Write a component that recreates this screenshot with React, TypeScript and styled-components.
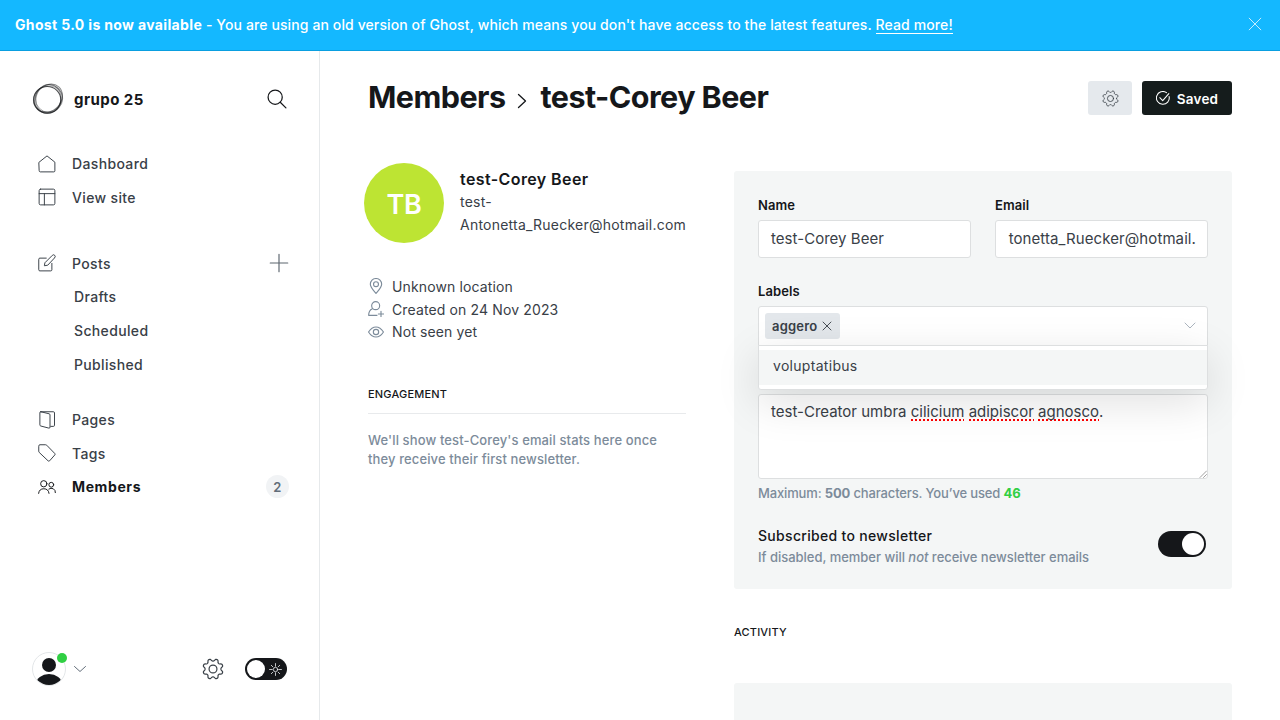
import React from "react";
import styled, { createGlobalStyle, css } from "styled-components";

const ink = "#15171a";
const slate = "#394047";
const muted = "#7c8b9a";
const rule = "#dddfe0";
const panel = "#f4f6f6";

const GlobalStyle = createGlobalStyle`
  *, *::before, *::after { box-sizing: border-box; }
  html, body { margin: 0; height: 100%; overflow: hidden; background: #fff; }
  body {
    font-family: Inter, "Liberation Sans", sans-serif;
    font-size: 14px;
    letter-spacing: 0.2px;
    color: ${ink};
    -webkit-font-smoothing: antialiased;
  }
  h1, h2, h4, p { margin: 0; }
  button { font: inherit; letter-spacing: inherit; border: 0; padding: 0; background: none; }
  svg { display: block; flex: none; }
`;

const Page = styled.div`
  height: 720px;
  display: flex;
  flex-direction: column;
  overflow: hidden;
`;

const Banner = styled.header`
  flex: none;
  height: 51px;
  padding: 0 18px 0 15px;
  display: flex;
  align-items: center;
  justify-content: space-between;
  background: #14b8ff;
  border-bottom: 1px solid #0a9fe0;
  color: #fff;
  font-size: 14px;
  font-weight: 500;
  line-height: 20px;
  letter-spacing: 0.11px;
  b { letter-spacing: 0.35px; }
  a { color: #fff; text-decoration: none; border-bottom: 1px solid #fff; }
  svg { margin-bottom: 2px; }
`;

const Body = styled.div`
  flex: 1;
  min-height: 0;
  display: flex;
`;

const Sidebar = styled.nav`
  width: 320px;
  flex: none;
  display: flex;
  flex-direction: column;
  border-right: 1px solid #e6e9eb;
  padding: 30px 30px 34px 32px;
`;

const Brand = styled.div`
  height: 36px;
  display: flex;
  align-items: center;
  margin-bottom: 30px;
  padding-right: 2px;
`;

const BrandName = styled.div`
  flex: 1;
  margin-left: 10px;
  font-size: 15px;
  font-weight: 700;
  letter-spacing: 0.45px;
  padding-top: 1px;
`;

const NavGroup = styled.div<{ $gap: number }>`
  margin-bottom: ${(p) => p.$gap}px;
`;

const NavRow = styled.div<{ $active?: boolean; $sub?: boolean }>`
  height: 33.6px;
  display: flex;
  align-items: center;
  padding-left: ${(p) => (p.$sub ? 42 : 6)}px;
  color: ${(p) => (p.$active ? ink : slate)};
  font-size: 14px;
  font-weight: ${(p) => (p.$active ? 700 : 500)};
  letter-spacing: ${(p) => (p.$active ? 0.6 : 0.35)}px;
`;

const NavIcon = styled.span`
  width: 34px;
  flex: none;
`;

const NavText = styled.span`
  flex: 1;
`;

const Count = styled.span`
  width: 23px;
  height: 23px;
  border-radius: 12px;
  display: grid;
  place-items: center;
  background: #f1f3f5;
  color: #626d79;
  font-size: 13px;
  font-weight: 600;
`;

const SidebarFooter = styled.div`
  margin-top: auto;
  display: flex;
  align-items: center;
  height: 34px;
`;

const Avatar = styled.div`
  position: relative;
  width: 34px;
  height: 34px;
  margin-right: 8px;
`;

const OnlineDot = styled.i`
  position: absolute;
  top: 1px;
  right: -1px;
  width: 10px;
  height: 10px;
  border-radius: 50%;
  background: #30cf43;
`;

const FooterGap = styled.div`
  flex: 1;
`;

const NightSwitch = styled.div`
  width: 42px;
  height: 22px;
  margin: 0 2px 0 21px;
  padding: 2px 5px 2px 2px;
  border-radius: 11px;
  background: ${ink};
  display: flex;
  align-items: center;
  justify-content: space-between;
`;

const Knob = styled.span<{ $size: number }>`
  width: ${(p) => p.$size}px;
  height: ${(p) => p.$size}px;
  border-radius: 50%;
  background: #fff;
`;

const Main = styled.main`
  flex: 1;
  min-width: 0;
  padding: 30px 48px 0;
`;

const TitleBar = styled.div`
  height: 34px;
  display: flex;
  align-items: center;
`;

const Title = styled.h1`
  flex: 1;
  display: flex;
  align-items: center;
  padding-bottom: 2px;
  font-size: 30.5px;
  line-height: 34px;
  font-weight: 700;
  letter-spacing: -0.55px;
  svg { margin: 7px 13px 0 12px; }
`;

const Button = styled.button<{ $primary?: boolean }>`
  height: 34px;
  width: ${(p) => (p.$primary ? 90 : 44)}px;
  margin-left: ${(p) => (p.$primary ? 10 : 0)}px;
  display: flex;
  align-items: center;
  justify-content: center;
  gap: 7px;
  border-radius: 3px;
  background: ${(p) => (p.$primary ? "#151c1c" : "#e5e9ed")};
  color: ${(p) => (p.$primary ? "#fff" : slate)};
  font-size: 13.5px;
  font-weight: 600;
  span { padding-top: 2px; }
`;

const Columns = styled.div`
  display: flex;
  margin-top: 48px;
  gap: 48px;
`;

const Profile = styled.section`
  width: 318px;
  flex: none;
`;

const Person = styled.div`
  display: flex;
  align-items: center;
  height: 80px;
  margin-left: -4px;
`;

const Initials = styled.div`
  width: 80px;
  height: 80px;
  flex: none;
  padding-top: 2px;
  border-radius: 50%;
  display: grid;
  place-items: center;
  background: #bde433;
  color: #fff;
  font-size: 27px;
  font-weight: 600;
  letter-spacing: -0.2px;
`;

const PersonText = styled.div`
  margin-left: 16px;
  padding-bottom: 3px;
  h2 { font-size: 16px; line-height: 22px; font-weight: 600; letter-spacing: 0.4px; }
  p { font-size: 14px; line-height: 23px; color: ${slate}; font-weight: 400; letter-spacing: 0.23px; }
`;

const Facts = styled.div`
  margin-top: 32px;
`;

const Fact = styled.div`
  display: flex;
  align-items: center;
  height: 22.8px;
  gap: 8px;
  font-size: 14px;
  color: ${slate};
  letter-spacing: 0.13px;
`;

const SectionTitle = styled.h4`
  font-size: 11px;
  line-height: 16px;
  font-weight: 500;
  text-transform: uppercase;
  letter-spacing: 0.18px;
`;

const Engagement = styled.div`
  margin-top: 42.4px;
  p {
    margin-top: 17px;
    font-size: 13px;
    line-height: 19px;
    font-weight: 500;
    color: ${muted};
    letter-spacing: 0.12px;
  }
`;

const Divider = styled.div`
  height: 1px;
  margin-top: 11px;
  background: #e8eaec;
`;

const Details = styled.section`
  flex: 1;
  min-width: 0;
  padding-top: 8px;
`;

const Card = styled.div`
  height: 418px;
  padding: 24px;
  border-radius: 3px;
  background: ${panel};
`;

const FieldPair = styled.div`
  display: grid;
  grid-template-columns: repeat(2, minmax(0, 1fr));
  gap: 24px;
`;

const Label = styled.label`
  display: block;
  height: 20px;
  margin-bottom: 5px;
  font-size: 13px;
  line-height: 20px;
  font-weight: 600;
  letter-spacing: 0.1px;
`;

const box = css`
  border: 1px solid ${rule};
  border-radius: 3px;
  background: #fff;
  color: ${slate};
  font-size: 15px;
  letter-spacing: 0.05px;
`;

const Input = styled.div<{ $end?: boolean }>`
  ${box}
  height: 38px;
  padding: 0 11px 0 12px;
  line-height: 36px;
  display: flex;
  justify-content: ${(p) => (p.$end ? "flex-end" : "flex-start")};
  letter-spacing: ${(p) => (p.$end ? 0.09 : 0.04)}px;
  white-space: nowrap;
  overflow: hidden;
`;

const LabelField = styled.div`
  position: relative;
  margin-top: 23px;
`;

const TokenBox = styled.div`
  ${box}
  height: 40px;
  padding: 0 11px 0 6px;
  display: flex;
  align-items: center;
  justify-content: space-between;
  border-radius: 3px 3px 0 0;
`;

const Token = styled.span`
  height: 26px;
  padding: 0 8px 1px 7px;
  display: flex;
  align-items: center;
  gap: 5px;
  border-radius: 3px;
  background: #e3e7eb;
  font-size: 13px;
  font-weight: 600;
  letter-spacing: 0.2px;
  line-height: 24px;
  svg { margin-top: 1px; }
`;

const Dropdown = styled.div`
  position: absolute;
  z-index: 2;
  left: 0;
  right: 0;
  top: 64px;
  height: 45px;
  padding: 4px 0;
  border: 1px solid ${rule};
  border-radius: 0 0 3px 3px;
  background: #fff;
  box-shadow: 0 12px 44px rgba(0, 0, 0, 0.13);
`;

const Option = styled.div`
  height: 35px;
  padding-left: 14px;
  line-height: 32px;
  background: ${panel};
  color: ${slate};
  font-size: 14px;
  letter-spacing: 0.3px;
`;

const Note = styled.div`
  ${box}
  margin-top: 48px;
  height: 85px;
  padding: 6px 12px;
  line-height: 22px;
  letter-spacing: 0;
  display: flex;
  justify-content: space-between;
  svg { align-self: flex-end; margin: 0 -12px -6px 0; }
`;

const Misspelt = styled.u`
  text-decoration: none;
  background: repeating-linear-gradient(90deg, #f00 0 2px, transparent 2px 4px) 0 100% / 100% 2px no-repeat;
`;

const Hint = styled.p<{ $top: number; $spacing: number }>`
  margin-top: ${(p) => p.$top}px;
  font-size: 13px;
  line-height: 18px;
  font-weight: 500;
  color: ${muted};
  letter-spacing: ${(p) => p.$spacing}px;
  b { font-weight: 700; }
`;

const Used = styled.b`
  color: #30cf43;
`;

const Subscription = styled.div`
  display: flex;
  justify-content: space-between;
  margin-top: 24px;
  h4 { font-size: 14px; line-height: 20px; font-weight: 500; letter-spacing: 0.31px; }
`;

const Toggle = styled.div`
  width: 48px;
  height: 26px;
  margin: 5px 2px 0 0;
  padding: 2px;
  border-radius: 13px;
  display: flex;
  justify-content: flex-end;
  background: ${ink};
`;

const Activity = styled.div`
  margin-top: 35px;
`;

const ActivityCard = styled.div`
  height: 120px;
  margin-top: 43px;
  border-radius: 3px;
  background: ${panel};
`;

type IconProps = {
  size?: number;
  w?: number;
  h?: number;
  stroke?: number;
  color?: string;
  box?: string;
  children: React.ReactNode;
};

const Icon = ({ size = 18, w, h, stroke = 1.5, color = "currentColor", box: viewBox = "0 0 24 24", children }: IconProps) => (
  <svg
    width={w ?? size}
    height={h ?? size}
    viewBox={viewBox}
    fill="none"
    stroke={color}
    strokeWidth={stroke}
    strokeLinecap="round"
    strokeLinejoin="round"
  >
    {children}
  </svg>
);

// Cog outline: eight soft teeth, none of them pointing straight up.
const cogPath =
  Array.from({ length: 96 }, (_, i) => {
    const a = (i / 96) * Math.PI * 2;
    const r = 9.9 + 1.35 * Math.tanh(-1.6 * Math.cos(8 * a));
    return `${i ? "L" : "M"}${(12 + r * Math.cos(a)).toFixed(2)} ${(12 + r * Math.sin(a)).toFixed(2)}`;
  }).join("") + "Z";

const Gear = ({ size, stroke }: { size: number; stroke: number }) => (
  <Icon size={size} stroke={stroke} color={slate}>
    <circle cx="12" cy="12" r="4.3" />
    <path d={cogPath} />
  </Icon>
);

const Orb = () => (
  <svg width="32" height="32" viewBox="0 0 32 32" fill="none" stroke="#15171a">
    <ellipse cx="15.2" cy="16.8" rx="13.6" ry="13.3" strokeWidth="1.2" strokeOpacity=".75" />
    <ellipse cx="16.5" cy="15.2" rx="15.3" ry="12.6" strokeWidth="1" strokeOpacity=".5" transform="rotate(-48 16.5 15.2)" />
    <ellipse cx="17" cy="15.4" rx="13.6" ry="14" strokeWidth="1" strokeOpacity=".35" />
    <ellipse cx="16" cy="16" rx="14.6" ry="12.8" strokeWidth="1.3" strokeOpacity=".3" transform="rotate(-20 16 16)" />
    <ellipse cx="16" cy="16.4" rx="14.6" ry="12.4" strokeWidth="1" strokeOpacity=".4" transform="rotate(-75 16 16)" />
  </svg>
);

const icons = {
  home: <path d="M1.5 9.6 12 1.2l10.5 8.4v11.4a1.5 1.5 0 0 1-1.5 1.5H3a1.5 1.5 0 0 1-1.5-1.5z" />,
  layout: (
    <>
      <rect x="1.5" y="1.5" width="21" height="21" rx="2" />
      <path d="M1.5 7.5h21M8.5 7.5v15" />
    </>
  ),
  edit: (
    <>
      <path d="M18.5 12.5v8.5a1.5 1.5 0 0 1-1.5 1.5H2.5A1.5 1.5 0 0 1 1 21V7a1.5 1.5 0 0 1 1.5-1.5H11" />
      <path d="m12.5 15-4 .7.7-4 9.9-9.9a2.2 2.2 0 0 1 3.2 3.2z" />
    </>
  ),
  pages: (
    <>
      <path d="M17 20.5h3.5a1.5 1.5 0 0 0 1.5-1.5V2.5A1.5 1.5 0 0 0 20.5 1H4" />
      <path d="m3.800 1 11 2.700A1.500 1.500 0 0 1 16 5.200V21.500a1.300 1.300 0 0 1-1.600 1.300L3.700 20A1.500 1.500 0 0 1 2.500 18.500V2.200A1.200 1.200 0 0 1 3.800 1z" />
    </>
  ),
  tag: <path d="M1 2.500A1.500 1.500 0 0 1 2.500 1h7.700a2 2 0 0 1 1.400.6l10.700 11a1.500 1.500 0 0 1 0 2.100L15.500 22.400a1.500 1.500 0 0 1-2.100 0L1.600 11.200A2 2 0 0 1 1 9.800z" />,
  members: (
    <>
      <circle cx="7.7" cy="7.7" r="4.2" />
      <circle cx="17.7" cy="9" r="3.2" />
      <path d="M.8 20.500a7 7 0 0 1 13.900 0M14.500 14.700a5.500 5.500 0 0 1 8.700 4.800" />
    </>
  ),
};

const NavItem = ({ icon, label, active, children }: { icon: keyof typeof icons; label: string; active?: boolean; children?: React.ReactNode }) => (
  <NavRow $active={active}>
    <NavIcon>
      <Icon stroke={1.3}>{icons[icon]}</Icon>
    </NavIcon>
    <NavText>{label}</NavText>
    {children}
  </NavRow>
);

export default function App() {
  return (
    <Page>
      <GlobalStyle />
      <Banner>
        <div>
          <b>Ghost 5.0 is now available</b> - You are using an old version of Ghost, which means you don't have access to the latest features.{" "}
          <a>Read more!</a>
        </div>
        <Icon size={14} stroke={1.3}>
          <path d="M2 2l20 20M22 2 2 22" />
        </Icon>
      </Banner>
      <Body>
        <Sidebar>
          <Brand>
            <Orb />
            <BrandName>grupo 25</BrandName>
            <Icon size={20} stroke={1.5}>
              <circle cx="9.8" cy="9.8" r="8.5" />
              <path d="m15.900 15.900 6.800 6.800" />
            </Icon>
          </Brand>
          <NavGroup $gap={32.3}>
            <NavItem icon="home" label="Dashboard" />
            <NavItem icon="layout" label="View site" />
          </NavGroup>
          <NavGroup $gap={22}>
            <NavItem icon="edit" label="Posts">
              <Icon size={20} stroke={1.4} color="#5d666f">
                <path d="M12 1.5v21M1.5 12h21" />
              </Icon>
            </NavItem>
            <NavRow $sub>Drafts</NavRow>
            <NavRow $sub>Scheduled</NavRow>
            <NavRow $sub>Published</NavRow>
          </NavGroup>
          <NavGroup $gap={0}>
            <NavItem icon="pages" label="Pages" />
            <NavItem icon="tag" label="Tags" />
            <NavItem icon="members" label="Members" active>
              <Count>2</Count>
            </NavItem>
          </NavGroup>
          <SidebarFooter>
            <Avatar>
              <svg width="34" height="34" viewBox="0 0 34 34">
                <clipPath id="face">
                  <circle cx="17" cy="17" r="16" />
                </clipPath>
                <circle cx="17" cy="17" r="16.5" fill="#fff" stroke="#e3e6e8" />
                <g clipPath="url(#face)" fill={ink}>
                  <circle cx="17" cy="13" r="7" />
                  <ellipse cx="17" cy="32" rx="13" ry="10" />
                </g>
              </svg>
              <OnlineDot />
            </Avatar>
            <Icon size={12} stroke={2} color="#626d79">
              <path d="m1 7 11 10L23 7" />
            </Icon>
            <FooterGap />
            <Gear size={22} stroke={1.3} />
            <NightSwitch>
              <Knob $size={18} />
              <Icon size={13} stroke={1.5} color="#e8eaec">
                <circle cx="12" cy="12" r="4" />
                <path d="M12 1v5M12 18v5M1 12h5M18 12h5M4.200 4.200l3 3M16.800 16.800l3 3M19.800 4.200l-3 3M7.200 16.800l-3 3" />
              </Icon>
            </NightSwitch>
          </SidebarFooter>
        </Sidebar>
        <Main>
          <TitleBar>
            <Title>
              Members
              <Icon w={10} h={16} box="0 0 10 16" stroke={1.3}>
                <path d="m1.500 1.500 7 6.500-7 6.500" />
              </Icon>
              test-Corey Beer
            </Title>
            <Button>
              <Gear size={17} stroke={1.2} />
            </Button>
            <Button $primary>
              <Icon size={14} stroke={1.8}>
                <path d="M22.500 9.500A11 11 0 1 1 18 2.800" />
                <path d="m6.500 11.500 5 5L22 4.500" />
              </Icon>
              <span>Saved</span>
            </Button>
          </TitleBar>
          <Columns>
            <Profile>
              <Person>
                <Initials>TB</Initials>
                <PersonText>
                  <h2>test-Corey Beer</h2>
                  <p>
                    test-
                    <br />
                    Antonetta_Ruecker@hotmail.com
                  </p>
                </PersonText>
              </Person>
              <Facts>
                <Fact>
                  <Icon size={16} stroke={1.7} color={muted}>
                    <path d="M12 23.200C9 19.500 3.500 14 3.500 9.300a8.500 8.500 0 0 1 17 0C20.500 14 15 19.500 12 23.200z" />
                    <circle cx="12" cy="9.3" r="3.7" />
                  </Icon>
                  Unknown location
                </Fact>
                <Fact>
                  <Icon size={16} stroke={1.7} color={muted}>
                    <circle cx="11.5" cy="7" r="6" />
                    <path d="M6.500 11.500C3 13 1 16.500 1 21.500h12.500M19.500 15.500v8M15.500 19.500h8" />
                  </Icon>
                  Created on 24 Nov 2023
                </Fact>
                <Fact>
                  <Icon size={16} stroke={1.7} color={muted}>
                    <path d="M.8 12C4 7 8 4.500 12 4.500S20 7 23.200 12C20 17 16 19.500 12 19.500S4 17 .8 12z" />
                    <circle cx="12" cy="12" r="4" />
                  </Icon>
                  Not seen yet
                </Fact>
              </Facts>
              <Engagement>
                <SectionTitle>Engagement</SectionTitle>
                <Divider />
                <p>
                  We'll show test-Corey's email stats here once
                  <br />
                  they receive their first newsletter.
                </p>
              </Engagement>
            </Profile>
            <Details>
              <Card>
                <FieldPair>
                  <div>
                    <Label>Name</Label>
                    <Input>test-Corey Beer</Input>
                  </div>
                  <div>
                    <Label>Email</Label>
                    <Input $end>tonetta_Ruecker@hotmail.</Input>
                  </div>
                </FieldPair>
                <LabelField>
                  <Label>Labels</Label>
                  <TokenBox>
                    <Token>
                      aggero
                      <Icon size={10} stroke={2.2}>
                        <path d="M2.500 2.500l19 19M21.500 2.500l-19 19" />
                      </Icon>
                    </Token>
                    <Icon size={12} stroke={2} color="#abb4be">
                      <path d="m2 6 10 10L22 6" />
                    </Icon>
                  </TokenBox>
                  <Dropdown>
                    <Option>voluptatibus</Option>
                  </Dropdown>
                </LabelField>
                <Note>
                  <span>
                    test-Creator umbra <Misspelt>cilicium</Misspelt> <Misspelt>adipiscor</Misspelt> <Misspelt>agnosco</Misspelt>.
                  </span>
                  <Icon size={8} stroke={0.8} box="0 0 8 8" color="#888">
                    <path d="M1 7.500 7.500 1M4.500 7.500l3-3" />
                  </Icon>
                </Note>
                <Hint $top={5} $spacing={-0.15}>
                  Maximum: <b>500</b> characters. You’ve used <Used>46</Used>
                </Hint>
                <Subscription>
                  <div>
                    <h4>Subscribed to newsletter</h4>
                    <Hint $top={2} $spacing={-0.02}>
                      If disabled, member will <em>not</em> receive newsletter emails
                    </Hint>
                  </div>
                  <Toggle>
                    <Knob $size={22} />
                  </Toggle>
                </Subscription>
              </Card>
              <Activity>
                <SectionTitle>Activity</SectionTitle>
                <ActivityCard />
              </Activity>
            </Details>
          </Columns>
        </Main>
      </Body>
    </Page>
  );
}
